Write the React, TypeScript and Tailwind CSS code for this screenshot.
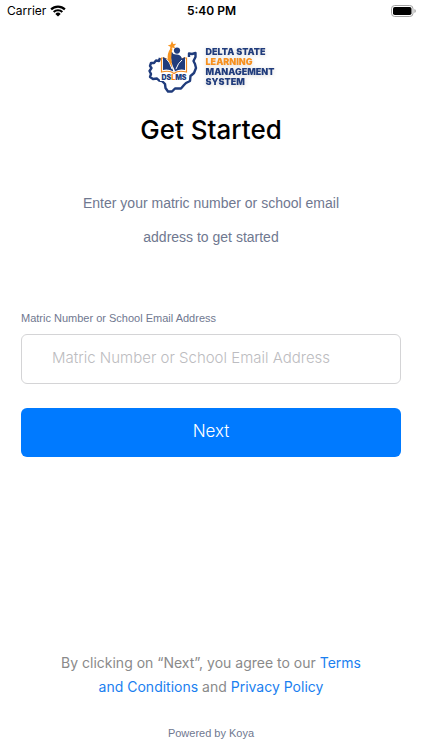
import React, { useState } from 'react';

const StatusBar: React.FC = () => (
  <header className="grid grid-cols-3 items-center h-[22px] pl-[7px] pr-[6px] text-[12px] text-black font-['Inter',sans-serif]">
    <div className="flex items-center gap-1">
      <span>Carrier</span>
      <svg className="w-4 h-3" viewBox="0 0 16 12" fill="none" stroke="currentColor" strokeWidth="2.2">
        <path d="M1.1 4.4 A9.8 9.8 0 0 1 14.9 4.4" />
        <path d="M3.7 7 A6.1 6.1 0 0 1 12.3 7" />
        <path d="M8 11.6 L5.3 8.9 A3.9 3.9 0 0 1 10.7 8.9 Z" fill="currentColor" stroke="none" />
      </svg>
    </div>
    <span className="text-center font-semibold">5:40 PM</span>
    <svg className="w-[25px] h-3 justify-self-end" viewBox="0 0 25 12">
      <rect x="0.5" y="0.5" width="21.5" height="11" rx="3.2" fill="none" stroke="#a3a3a3" />
      <rect x="2" y="2" width="18.5" height="8" rx="1.8" fill="#000" />
      <path d="M23.4 4 a2.1 2.1 0 0 1 0 4 Z" fill="#a3a3a3" />
    </svg>
  </header>
);

const Logo: React.FC = () => (
  <div className="flex items-center justify-center gap-2">
    <svg className="w-[50px] h-[54px]" viewBox="0 0 50 54" role="img" aria-label="DSLMS">
      <path
        d="M12 18 L11 21 L8 20.5 L6 23 L3 23 L2 26 L3.5 28 L1.5 31 L3 34 L2 37 L5 39 L9 38.5 L11 40.5 L14 41 L17 44 L17.5 48 L20 51.5 L24 51.5 L27 48.5 L33 48.5 L36 45 L38 43 L42 41 L42.5 36 L46 33 L48 28 L47 24 L45.5 21 L47.5 17 L47.5 13 L44 14 L41 13.5 L41 17"
        fill="none" stroke="#203c7c" strokeWidth="2.4" strokeLinejoin="round"
      />
      <path d="M13.5 18 H16 Q23 20 26 25 Q29 20 36 18 H38.5 V32 Q30 30 26 33.5 Q22 30 13.5 32 Z" fill="#fff" stroke="#f08b22" strokeWidth="1.2" />
      <path d="M15 17 Q22 19 25.3 31.5 Q20 28.5 15 30 Z" fill="#203c7c" />
      <path d="M37 17 Q30 19 26.7 31.5 Q32 28.5 37 30 Z" fill="#203c7c" />
      <path d="M24 12 Q25 15 29 14.5 Q34 15 34 20 L30 25 L27 31 Q22 22 23 12 Z" fill="#203c7c" />
      <path d="M18.5 19 Q22 22 24 29 M34 20 Q30 23 28 29" fill="none" stroke="#fff" strokeWidth="1" />
      <circle cx="29" cy="10.6" r="3.1" fill="#203c7c" />
      <path d="M24 1 L25.3 4 L28.3 3.7 L26.1 6 L27.2 8.6 L24.5 7.5 L22.2 9.5 L22.3 6.7 L19.8 5.4 L22.7 4.4 Z" fill="#f79420" />
      <path d="M22.7 8 Q18.5 14 20 20 L24.5 28 Q22 18 24.5 8.5 Z" fill="#f79420" />
      <rect x="12" y="34" width="28" height="7" fill="#fff" />
      <text x="26" y="40" textAnchor="middle" fontFamily="Inter, sans-serif" fontSize="7" fontWeight="900" fill="#203c7c">
        DS<tspan fill="#f7830a">L</tspan>MS
      </text>
    </svg>
    <div className="flex flex-col text-[9px] leading-[10px] font-black uppercase text-[#203c7c] font-['Inter',sans-serif] drop-shadow-sm">
      <span>Delta State</span>
      <span className="text-[#f7901e]">Learning</span>
      <span>Management</span>
      <span>System</span>
    </div>
  </div>
);

const App: React.FC = () => {
  const [identifier, setIdentifier] = useState('');

  return (
    <div className="flex flex-col min-h-screen bg-white font-['Liberation_Sans',sans-serif]">
      <StatusBar />

      <main className="flex flex-col flex-grow px-[21px] pt-[18px]">
        <Logo />
        <h1 className="mt-4 text-center text-[26px] leading-[40px] font-medium text-black font-['Inter',sans-serif]">
          Get Started
        </h1>
        <p className="mt-9 px-12 text-center text-[14px] leading-[34px] text-[#6f7890]">
          Enter your matric number or school email address to get started
        </p>

        <form className="flex flex-col mt-14" onSubmit={(e) => e.preventDefault()}>
          <label htmlFor="identifier" className="text-[11px] leading-4 text-[#6f7890]">
            Matric Number or School Email Address
          </label>
          <input
            id="identifier"
            type="text"
            value={identifier}
            onChange={(e) => setIdentifier(e.target.value)}
            placeholder="Matric Number or School Email Address"
            className="mt-2 h-[50px] px-[30px] pb-1 rounded-md border border-[#d4d4d6] text-[15px] font-light text-black placeholder:text-[#bcbcc0] font-['Inter',sans-serif]"
          />
          <button
            type="submit"
            className="mt-6 h-[49px] pb-0.5 rounded-md bg-[#007aff] text-[17px] font-light text-white font-['Inter',sans-serif]"
          >
            Next
          </button>
        </form>
      </main>

      <footer className="px-14 pb-[9px] text-center">
        <p className="text-[14px] leading-6 text-[#8a8a8a] font-['Inter',sans-serif]">
          By clicking on “Next”, you agree to our{' '}
          <a href="#terms" className="text-[#1a80f0]">Terms and Conditions</a> and{' '}
          <a href="#privacy" className="text-[#1a80f0]">Privacy Policy</a>
        </p>
        <p className="mt-[26px] text-[11px] leading-4 text-[#6f7890]">Powered by Koya</p>
      </footer>
    </div>
  );
};

export default App;
